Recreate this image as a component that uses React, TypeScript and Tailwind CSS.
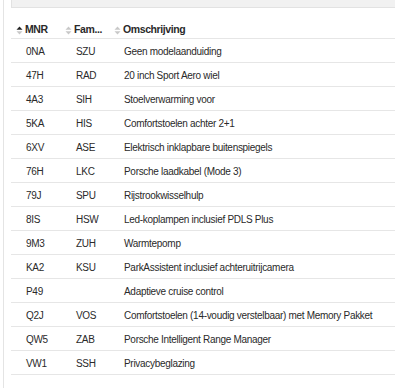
import React from "react";

const rows = [
  ["0NA", "SZU", "Geen modelaanduiding"],
  ["47H", "RAD", "20 inch Sport Aero wiel"],
  ["4A3", "SIH", "Stoelverwarming voor"],
  ["5KA", "HIS", "Comfortstoelen achter 2+1"],
  ["6XV", "ASE", "Elektrisch inklapbare buitenspiegels"],
  ["76H", "LKC", "Porsche laadkabel (Mode 3)"],
  ["79J", "SPU", "Rijstrookwisselhulp"],
  ["8IS", "HSW", "Led-koplampen inclusief PDLS Plus"],
  ["9M3", "ZUH", "Warmtepomp"],
  ["KA2", "KSU", "ParkAssistent inclusief achteruitrijcamera"],
  ["P49", "", "Adaptieve cruise control"],
  ["Q2J", "VOS", "Comfortstoelen (14-voudig verstelbaar) met Memory Pakket"],
  ["QW5", "ZAB", "Porsche Intelligent Range Manager"],
  ["VW1", "SSH", "Privacybeglazing"],
];

function SortIcon({ active }: { active?: boolean }) {
  return (
    <svg width="7" height="9" viewBox="0 0 7 9" className="shrink-0">
      <path d="M3.5 0.5 L6.5 3.8 L0.5 3.8 Z" fill={active ? "#222" : "#c8c8c8"} />
      <path d="M3.5 8.5 L6.5 5.2 L0.5 5.2 Z" fill="#c8c8c8" />
    </svg>
  );
}

export default function App() {
  return (
    <div className="w-[395px] h-[388px] bg-white flex overflow-hidden text-[#2a2a2a]" style={{ fontFamily: "'Liberation Sans', Arial, sans-serif" }}>
      <div className="w-[3px] shrink-0" />
      <div className="w-px shrink-0 bg-[#e4e4e4]" />
      <div className="flex-1 flex flex-col pl-[7px]">
        <div className="h-[8px] bg-[#f1f1f1] border-b border-l border-[#e2e2e2]" />
        <div className="flex flex-col mt-[15px]">
          <div className="flex items-center h-[16px] text-[10.5px] font-bold tracking-[-0.4px] border-b border-[#e6e6e6] pb-[1px]">
            <div className="w-[50px] pl-[5px] flex items-center gap-[2px]">
              <SortIcon active />
              <span>MNR</span>
            </div>
            <div className="w-[49px] pl-[4px] flex items-center gap-[2px]">
              <SortIcon />
              <span>Fam...</span>
            </div>
            <div className="flex-1 pl-[4px] flex items-center gap-[2px]">
              <SortIcon />
              <span>Omschrijving</span>
            </div>
          </div>
          {rows.map(([mnr, fam, desc]) => (
            <div key={mnr} className="flex items-center h-[24px] pt-[1px] text-[10px] tracking-[-0.3px] border-b border-[#e6e6e6]">
              <div className="w-[50px] pl-[15px]">{mnr}</div>
              <div className="w-[49px] pl-[15px]">{fam}</div>
              <div className="flex-1 pl-[14px] whitespace-nowrap">{desc}</div>
            </div>
          ))}
        </div>
      </div>
    </div>
  );
}
